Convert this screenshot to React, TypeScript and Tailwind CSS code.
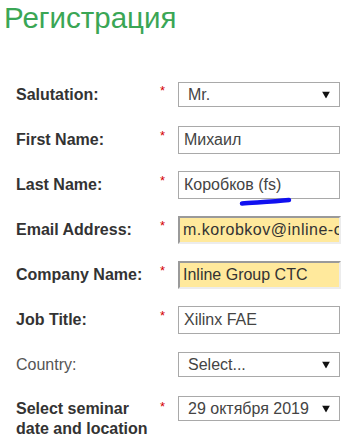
import React from "react";

const font = { fontFamily: '"Liberation Sans", Arial, sans-serif' };

function Arrow() {
  return (
    <svg width="8" height="7" viewBox="0 0 8 7" className="absolute right-[9px] top-1/2 -translate-y-1/2">
      <polygon points="0,0 8,0 4,7" fill="#111" />
    </svg>
  );
}

function Label({ children, bold = true }: { children: React.ReactNode; bold?: boolean }) {
  return (
    <div
      className={`w-[144px] text-[16px] leading-[20px] ${bold ? "font-bold text-[#333]" : "font-normal text-[#555]"}`}
    >
      {children}
    </div>
  );
}

function Star({ show = true }: { show?: boolean }) {
  return (
    <div className="w-[18px] text-[13px] leading-[13px] text-[#d40000] -mt-[8px]">
      {show ? "*" : ""}
    </div>
  );
}

function Select({ value }: { value: string }) {
  return (
    <div className="relative w-[162px] h-[25px] border border-[#a9a9a9] bg-white flex items-center pl-[9px] text-[16px] text-[#444]">
      {value}
      <Arrow />
    </div>
  );
}

function Input({ value }: { value: string }) {
  return (
    <div className="w-[162px] h-[28px] border border-[#a9a9a9] bg-white flex items-center pl-[5px] text-[16px] text-[#444] whitespace-nowrap overflow-hidden">
      {value}
    </div>
  );
}

function AutoInput({ value, wide = false }: { value: string; wide?: boolean }) {
  return (
    <div
      className={`w-[163px] h-[28px] border-2 border-t-[#9a9a9a] border-l-[#9a9a9a] border-r-[#ececec] border-b-[#ececec] bg-[#ffe99c] flex items-center pl-[3px] text-[16px] text-[#333] whitespace-nowrap overflow-hidden ${wide ? "tracking-[0.5px]" : ""}`}
    >
      {value}
    </div>
  );
}

export default function App() {
  return (
    <div className="w-[354px] h-[444px] bg-white overflow-hidden relative" style={font}>
      <div className="pl-[4px] pt-[1px] h-[72px] text-[29.5px] leading-[34px] text-[#3aa655]">Регистрация</div>
      <div className="pl-[16px]">
        <div className="h-[45px] flex items-center">
          <Label>Salutation:</Label>
          <Star />
          <Select value="Mr." />
        </div>
        <div className="h-[45px] flex items-center">
          <Label>First Name:</Label>
          <Star />
          <Input value="Михаил" />
        </div>
        <div className="h-[45px] flex items-center relative">
          <Label>Last Name:</Label>
          <Star />
          <Input value="Коробков (fs)" />
          <svg
            className="absolute left-[223px] top-[35px]"
            width="54"
            height="10"
            viewBox="0 0 54 10"
          >
            <path
              d="M3 6.5 C 14 5.5, 32 5, 50 3"
              fill="none"
              stroke="#1010f0"
              strokeWidth="4.5"
              strokeLinecap="round"
            />
          </svg>
        </div>
        <div className="h-[45px] flex items-center">
          <Label>Email Address:</Label>
          <Star />
          <AutoInput value="m.korobkov@inline-c" wide />
        </div>
        <div className="h-[45px] flex items-center">
          <Label>Company Name:</Label>
          <Star />
          <AutoInput value="Inline Group CTC" />
        </div>
        <div className="h-[45px] flex items-center">
          <Label>Job Title:</Label>
          <Star />
          <Input value="Xilinx FAE" />
        </div>
        <div className="h-[45px] flex items-center">
          <Label bold={false}>Country:</Label>
          <Star show={false} />
          <Select value="Select..." />
        </div>
        <div className="flex items-start pt-[9px]">
          <div className="pt-[3px]">
            <Label>
              Select seminar
              <br />
              date and location
            </Label>
          </div>
          <div className="w-[18px] pt-[4px]">
            <div className="text-[13px] leading-[13px] text-[#d40000]">*</div>
          </div>
          <Select value="29 октября 2019" />
        </div>
      </div>
    </div>
  );
}
